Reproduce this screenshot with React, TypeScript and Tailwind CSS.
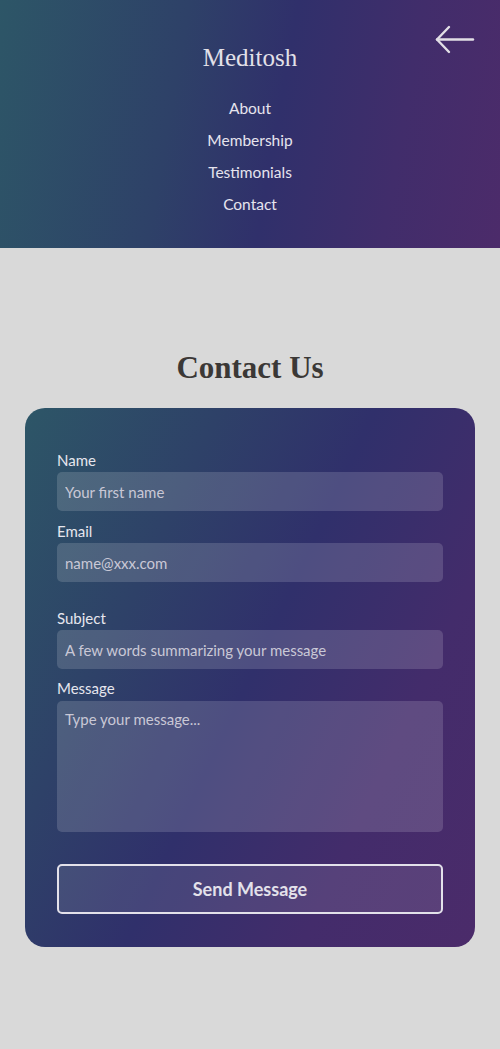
const serif = "font-['Liberation_Serif','DejaVu_Serif',serif]";
const sans = "font-['Lato','Noto_Sans',sans-serif]";

function BackArrow() {
  return (
    <svg width="40" height="30" viewBox="0 0 40 30" fill="none" className="text-[#e2dfe6]">
      <path d="M2 14.5H38" stroke="currentColor" strokeWidth="2.4" strokeLinecap="round" />
      <path d="M14 2L2 14.5L14 27" stroke="currentColor" strokeWidth="2.4" strokeLinecap="round" strokeLinejoin="round" />
    </svg>
  );
}

function Field({ label, placeholder, className = "" }: { label: string; placeholder: string; className?: string }) {
  return (
    <label className={`flex flex-col gap-[2px] ${className}`}>
      <span className="text-[15px] leading-5 text-[#e6e6ee]">{label}</span>
      <input
        placeholder={placeholder}
        className="h-[39px] rounded-[5px] bg-white/15 px-2 text-[15px] text-white outline-none placeholder:text-[#c9c8d6]"
      />
    </label>
  );
}

export default function App() {
  return (
    <div className={`min-h-[1049px] bg-[#d9d9d9] ${sans}`}>
      <header className="relative flex h-[248px] flex-col items-center bg-[linear-gradient(100deg,#2d5667_0%,#2e4168_35%,#30306b_55%,#412d6b_78%,#4c2b6a_100%)] pt-[42px]">
        <button className="absolute right-[25px] top-[25px]" aria-label="Back">
          <BackArrow />
        </button>
        <h1 className={`${serif} text-[25px] leading-8 text-[#e2e0e8]`}>Meditosh</h1>
        <nav className="mt-[24px] flex flex-col items-center gap-3 text-[15.5px] leading-5 text-[#e6e4ee]">
          <a>About</a>
          <a>Membership</a>
          <a>Testimonials</a>
          <a>Contact</a>
        </nav>
      </header>

      <main className="flex flex-col items-center px-[25px] pt-[102px] pb-[103px]">
        <h2 className={`${serif} text-[31px] font-bold leading-9 text-[#3b3836]`}>Contact Us</h2>
        <form className="mt-[22px] flex w-full flex-col rounded-[20px] bg-[linear-gradient(115deg,#2d5667_0%,#2e4168_28%,#30306b_50%,#432c6b_75%,#4b2b6a_100%)] px-8 pt-[42px] pb-[33px]">
          <Field label="Name" placeholder="Your first name" />
          <Field label="Email" placeholder="name@xxx.com" className="mt-[10px]" />
          <Field label="Subject" placeholder="A few words summarizing your message" className="mt-[26px]" />
          <label className="mt-[9px] flex flex-col gap-[3px]">
            <span className="text-[15px] leading-5 text-[#e6e6ee]">Message</span>
            <textarea
              placeholder="Type your message..."
              className="h-[131px] resize-none rounded-[5px] bg-white/15 px-2 py-[7px] text-[15px] text-white outline-none placeholder:text-[#c9c8d6]"
            />
          </label>
          <button
            type="button"
            className="mt-8 h-[50px] rounded-[5px] border-2 border-[#e3e1ea] bg-white/10 text-[18px] font-bold text-[#e3e1ea]"
          >
            Send Message
          </button>
        </form>
      </main>
    </div>
  );
}
